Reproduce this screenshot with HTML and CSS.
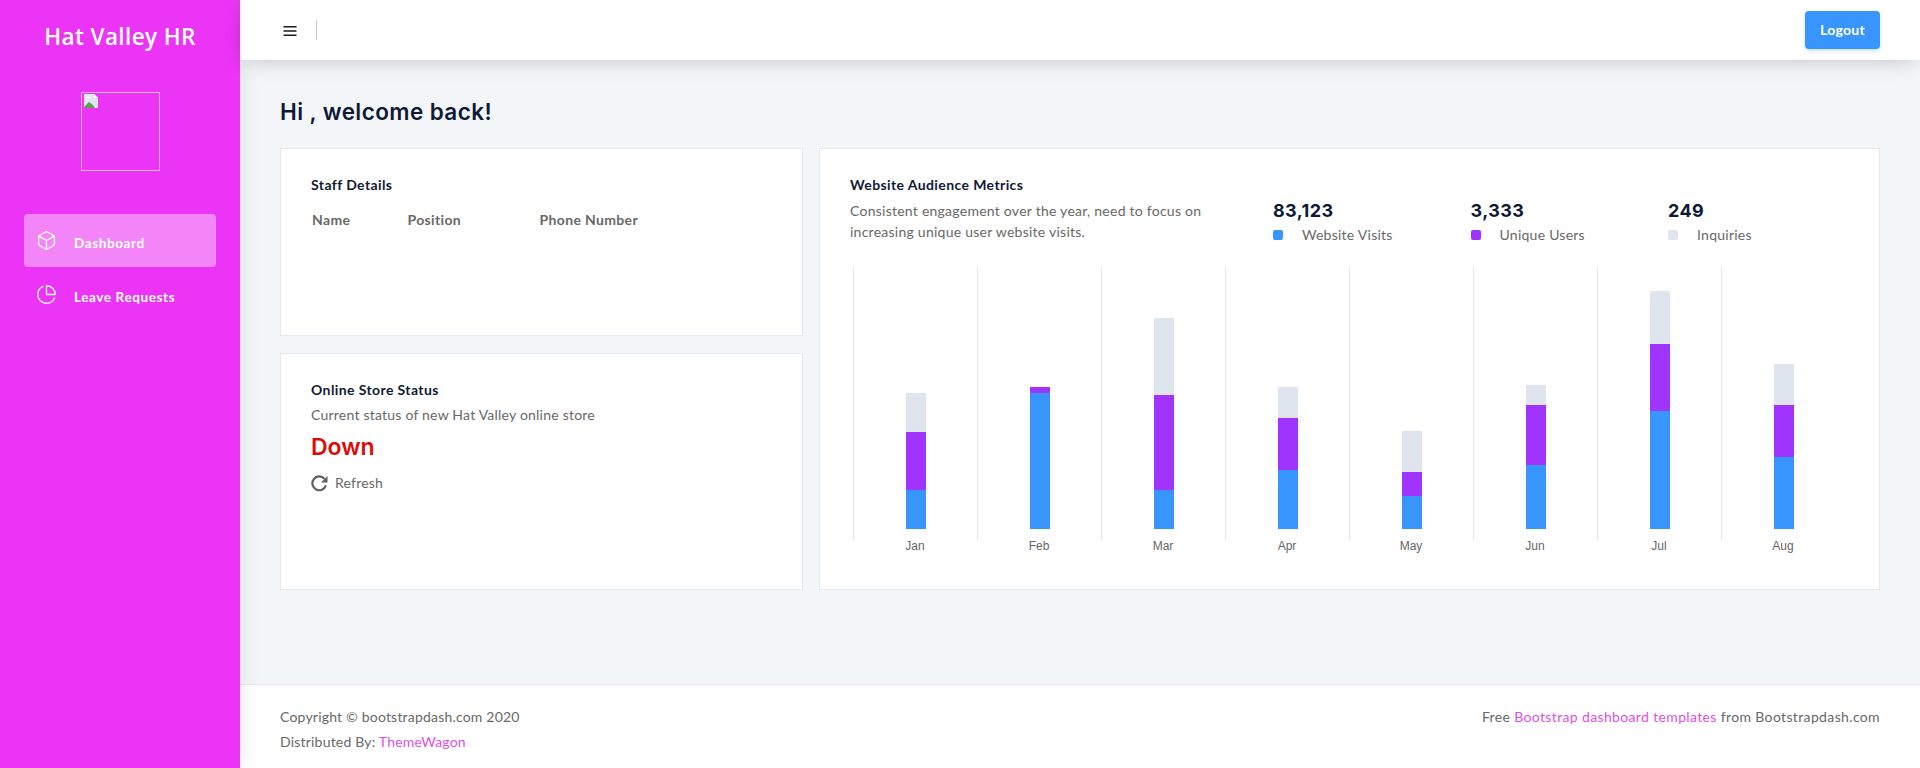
FILE: index.html
```html
<!DOCTYPE html>
<html lang="en">
<head>
<meta charset="utf-8">
<title>Hat Valley HR</title>
<link rel="stylesheet" href="styles.css">
</head>
<body>
<div class="app">
  <aside class="sidebar">
    <div class="brand">Hat Valley HR</div>
    <div class="avatar">
      <svg class="broken" width="16" height="16" viewBox="0 0 16 16"><path d="M1 0h10l4 4v10H1z" fill="#dfe6f5"/><path d="M11 0v4h4z" fill="#fff"/><path d="M1 13l5-5 4 3 2 3H1z" fill="#5da14a"/><path d="M2 4l3-2 3 2z" fill="#fff"/></svg>
    </div>
    <nav class="nav">
      <a class="nav-item active">
        <svg class="nav-icon" viewBox="0 0 24 24"><path d="M21 16V8a2 2 0 0 0-1-1.730l-7-4a2 2 0 0 0-2 0l-7 4A2 2 0 0 0 3 8v8a2 2 0 0 0 1 1.730l7 4a2 2 0 0 0 2 0l7-4A2 2 0 0 0 21 16z"/><path d="M3.270 6.960 12 12.010l8.730-5.050M12 22.080V12"/></svg>
        <span>Dashboard</span>
      </a>
      <a class="nav-item">
        <svg class="nav-icon" viewBox="0 0 24 24"><path d="M21.210 15.890A10 10 0 1 1 8 2.830"/><path d="M22 12A10 10 0 0 0 12 2v10z"/></svg>
        <span>Leave Requests</span>
      </a>
    </nav>
  </aside>
  <div class="main">
    <header class="topbar">
      <div class="menu-wrap">
        <svg class="burger" width="16" height="12" viewBox="0 0 16 12"><path d="M1.500 1.700h13M1.500 6h13M1.500 10.300h13"/></svg>
      </div>
      <button class="logout">Logout</button>
    </header>
    <main class="content">
      <h1 class="welcome">Hi , welcome back!</h1>
      <div class="grid">
        <div class="left-col">
          <section class="card staff">
            <h2 class="card-title">Staff Details</h2>
            <div class="staff-head"><span class="c-name">Name</span><span class="c-pos">Position</span><span>Phone Number</span></div>
          </section>
          <section class="card store">
            <h2 class="card-title">Online Store Status</h2>
            <p class="muted store-sub">Current status of new Hat Valley online store</p>
            <div class="down">Down</div>
            <div class="refresh">
              <svg width="17" height="17" viewBox="0 0 17 17"><path d="M14.900 10.300A6.900 6.900 0 1 1 13.400 3.700"/><path class="solid" d="M16.500 1v6.500h-6.500z"/></svg>
              <span>Refresh</span>
            </div>
          </section>
        </div>
        <section class="card metrics">
          <div class="metrics-head">
            <div class="metrics-intro">
              <h2 class="card-title">Website Audience Metrics</h2>
              <p class="muted intro-text">Consistent engagement over the year, need to focus on increasing unique user website visits.</p>
            </div>
            <div class="stats">
              <div class="stat"><div class="stat-num">83,123</div><div class="stat-label"><i class="dot blue"></i>Website Visits</div></div>
              <div class="stat"><div class="stat-num">3,333</div><div class="stat-label"><i class="dot purple"></i>Unique Users</div></div>
              <div class="stat"><div class="stat-num">249</div><div class="stat-label"><i class="dot grey"></i>Inquiries</div></div>
            </div>
          </div>
          <div class="chart">
            <div class="col"><div class="plot"><div class="bar"><i class="seg grey" style="height:39px"></i><i class="seg purple" style="height:58px"></i><i class="seg blue" style="height:39px"></i></div></div><span>Jan</span></div>
            <div class="col"><div class="plot"><div class="bar"><i class="seg purple" style="height:6px"></i><i class="seg blue" style="height:136px"></i></div></div><span>Feb</span></div>
            <div class="col"><div class="plot"><div class="bar"><i class="seg grey" style="height:77px"></i><i class="seg purple" style="height:95px"></i><i class="seg blue" style="height:39px"></i></div></div><span>Mar</span></div>
            <div class="col"><div class="plot"><div class="bar"><i class="seg grey" style="height:31px"></i><i class="seg purple" style="height:52px"></i><i class="seg blue" style="height:59px"></i></div></div><span>Apr</span></div>
            <div class="col"><div class="plot"><div class="bar"><i class="seg grey" style="height:41px"></i><i class="seg purple" style="height:24px"></i><i class="seg blue" style="height:33px"></i></div></div><span>May</span></div>
            <div class="col"><div class="plot"><div class="bar"><i class="seg grey" style="height:20px"></i><i class="seg purple" style="height:60px"></i><i class="seg blue" style="height:64px"></i></div></div><span>Jun</span></div>
            <div class="col"><div class="plot"><div class="bar"><i class="seg grey" style="height:53px"></i><i class="seg purple" style="height:67px"></i><i class="seg blue" style="height:118px"></i></div></div><span>Jul</span></div>
            <div class="col"><div class="plot"><div class="bar"><i class="seg grey" style="height:41px"></i><i class="seg purple" style="height:52px"></i><i class="seg blue" style="height:72px"></i></div></div><span>Aug</span></div>
          </div>
        </section>
      </div>
    </main>
    <footer class="footer">
      <div class="foot-left">
        <div>Copyright © bootstrapdash.com 2020</div>
        <div>Distributed By: <a class="foot-link">ThemeWagon</a></div>
      </div>
      <div class="foot-right">Free <a class="foot-link">Bootstrap dashboard templates</a> from Bootstrapdash.com</div>
    </footer>
  </div>
</div>
</body>
</html>
```
FILE: styles.css
```css
* { box-sizing: border-box; }
html, body { margin: 0; height: 100%; }
body { font-family: "Lato", "Liberation Sans", sans-serif; font-size: 14px; color: #686868; background: #f3f6f9; overflow: hidden; }
.app { display: flex; height: 768px; }
.sidebar { width: 240px; flex: none; background: #eb34f5; color: #fff; box-shadow: 0 0 21px rgba(0,0,0,.1); position: relative; z-index: 2; }
.brand { font: 600 22.500px/32px "Open Sans", sans-serif; text-align: center; padding-top: 21px; letter-spacing: .4px; box-sizing: content-box; }
.avatar { width: 79px; height: 79px; border: 1px solid rgba(255,255,255,.65); margin: 39px 0 0 81px; padding: 1px; }
.broken { display: block; }
.nav { margin-top: 43px; padding: 0 24px; }
.nav-item { display: flex; align-items: center; height: 53px; padding: 0 12px; border-radius: 4px; font-size: 13.500px; font-weight: 700; letter-spacing: .6px; color: #fff; }
.nav-item.active { background: rgba(255,255,255,.4); }
.nav-item + .nav-item { margin-top: 1px; }
.nav-item span { margin-left: 17px; padding-top: 5px; }
.nav-icon { width: 21px; height: 21px; flex: none; fill: none; stroke: #fff; stroke-width: 1.500; stroke-linecap: round; stroke-linejoin: round; }
.main { flex: 1; min-width: 0; display: flex; flex-direction: column; }
.topbar { height: 60px; flex: none; background: #fff; display: flex; align-items: center; justify-content: space-between; padding: 0 40px; box-shadow: 0 5px 21px -5px rgba(0,0,0,.22); position: relative; z-index: 3; }
.menu-wrap { height: 20px; border-right: 1px solid #c8cdd4; width: 37px; display: flex; align-items: center; }
.burger { fill: none; stroke: #1a1a1a; stroke-width: 1.400; margin: 1px 0 0 2px; }
.logout { width: 75px; height: 38px; border: 0; border-radius: 4px; padding: 0 0 2px; background: #3895fd; color: #fff; font: 700 14px "Lato", sans-serif; letter-spacing: .3px; box-shadow: 0 2px 4px rgba(58,151,253,.3); }
.content { flex: 1; padding: 36px 40px 0; }
.welcome { margin: 0 0 20px; font: 600 22.500px/32px "Inter", sans-serif; color: #0e1a35; letter-spacing: .4px; }
.grid { display: grid; grid-template-columns: 523px 1061px; gap: 16px; height: 442px; }
.left-col { display: grid; grid-template-rows: 188px 237px; gap: 17px; }
.card { background: #fff; border: 1px solid #e3e8f1; }
.card-title { margin: 0; font: 700 14px/20px "Lato", sans-serif; color: #0e1a35; letter-spacing: .4px; }
.muted { margin: 0; font-size: 14px; color: #686868; }
.staff { padding: 26px 30px; }
.staff-head { display: flex; margin: 16px 0 0 1px; font-weight: 700; font-size: 14px; letter-spacing: .35px; }
.c-name { width: 95.500px; }
.c-pos { width: 132px; }
.store { padding: 26px 30px; }
.store-sub { margin-top: 4px; line-height: 21px; letter-spacing: .22px; }
.down { color: #dd0a0a; font: 600 23px/32px "Inter", sans-serif; margin-top: 6px; }
.refresh { display: flex; align-items: center; margin-top: 10px; gap: 7px; font-size: 14px; line-height: 20px; letter-spacing: .2px; }
.refresh svg { fill: none; stroke: #5f5f5f; stroke-width: 2.200; }
.refresh .solid { fill: #5f5f5f; stroke: none; }
.metrics { padding: 26px 24px 0 30px; display: flex; flex-direction: column; }
.metrics-head { display: flex; height: 84px; }
.metrics-intro { width: 423px; flex: none; }
.intro-text { line-height: 21px; margin-top: 5px; letter-spacing: .25px; max-width: 372px; }
.stats { display: flex; flex: none; padding-top: 23px; }
.stat { width: 197.500px; }
.stat-num { font: 700 18px/26px "Inter", sans-serif; color: #0e1a35; letter-spacing: .4px; }
.stat-label { display: flex; align-items: center; font-size: 14px; line-height: 20px; letter-spacing: .25px; margin-top: 1px; }
.dot { width: 10px; height: 10px; border-radius: 2px; margin-right: 19px; flex: none; }
.blue { background: #3895fd; }
.purple { background: #a033fd; }
.grey { background: #dfe5ee; }
.chart { display: flex; padding-left: 3px; margin-top: 8px; }
.col { width: 124px; }
.col > span { display: block; text-align: center; font: 12px/14px "Liberation Sans", sans-serif; color: #666; margin-top: -1px; }
.plot { height: 273px; border-left: 1px solid #e3e8f1; display: flex; justify-content: center; align-items: flex-end; padding-bottom: 11px; }
.bar { width: 20px; display: flex; flex-direction: column; }
.seg { display: block; }
.footer { height: 84px; flex: none; background: #fff; border-top: 1px solid #e6e9ef; display: flex; justify-content: space-between; padding: 22px 40px 0; font-size: 14px; line-height: 20px; letter-spacing: .2px; }
.foot-left div + div { margin-top: 5px; }
.foot-right { letter-spacing: .36px; }
.foot-link { color: #dc50e6; }
```
